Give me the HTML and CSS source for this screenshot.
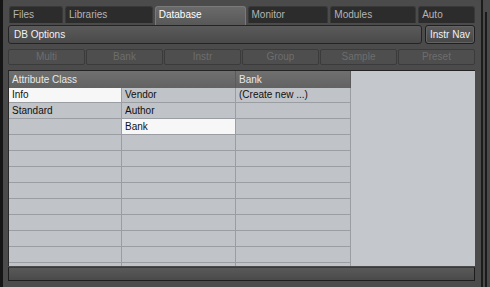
FILE: index.html
```html
<!DOCTYPE html>
<html lang="en">
<head>
    <meta charset="UTF-8">
    <title>Database</title>
    <link rel="stylesheet" href="styles.css">
</head>
<body>
    <div class="app">
        <div class="edge"></div>
        <div class="panel">
            <div class="tabs">
                <div class="tab tab-files">Files</div>
                <div class="tab tab-libs">Libraries</div>
                <div class="tab tab-db active">Database</div>
                <div class="tab tab-mon">Monitor</div>
                <div class="tab tab-mod">Modules</div>
                <div class="tab tab-auto">Auto</div>
            </div>
            <div class="optbar">
                <div class="dbopts">DB Options</div>
                <div class="navbtn">Instr Nav</div>
            </div>
            <div class="tools">
                <div class="tool">Multi</div>
                <div class="tool">Bank</div>
                <div class="tool">Instr</div>
                <div class="tool">Group</div>
                <div class="tool">Sample</div>
                <div class="tool">Preset</div>
            </div>
            <div class="table">
                <div class="grid">
                    <div class="head span2">Attribute Class</div>
                    <div class="head">Bank</div>

                    <div class="cell first sel">Info</div>
                    <div class="cell first">Vendor</div>
                    <div class="cell first">(Create new ...)</div>

                    <div class="cell">Standard</div>
                    <div class="cell">Author</div>
                    <div class="cell"></div>

                    <div class="cell"></div>
                    <div class="cell sel">Bank</div>
                    <div class="cell"></div>

                    <div class="cell"></div><div class="cell"></div><div class="cell"></div>
                    <div class="cell"></div><div class="cell"></div><div class="cell"></div>
                    <div class="cell"></div><div class="cell"></div><div class="cell"></div>
                    <div class="cell"></div><div class="cell"></div><div class="cell"></div>
                    <div class="cell"></div><div class="cell"></div><div class="cell"></div>
                    <div class="cell"></div><div class="cell"></div><div class="cell"></div>
                    <div class="cell"></div><div class="cell"></div><div class="cell"></div>
                    <div class="cell"></div><div class="cell"></div><div class="cell"></div>
                    <div class="cell"></div><div class="cell"></div><div class="cell"></div>
                </div>
                <div class="blank"></div>
            </div>
            <div class="statusbar"></div>
        </div>
        <div class="side">
            <div class="side-gap"></div>
            <div class="side-panel">
                <div class="side-line"></div>
            </div>
        </div>
    </div>
</body>
</html>
```

FILE: styles.css
```css
* {
    box-sizing: border-box;
}
html, body {
    margin: 0;
    height: 100%;
}
body {
    background: #4a4a4a;
    font-family: "Liberation Sans", Arial, sans-serif;
    font-size: 10px;
    overflow: hidden;
}
.app {
    display: flex;
    height: 287px;
}
.edge {
    width: 3px;
    background: #151515;
}
.panel {
    width: 478px;
    background: #4b4b4b;
    border-radius: 6px 6px 0 0;
    padding: 6px 6px 0 5px;
    display: flex;
    flex-direction: column;
}

/* tabs */
.tabs {
    display: flex;
    align-items: flex-start;
    height: 19px;
}
.tab {
    height: 17px;
    line-height: 15px;
    padding-left: 3px;
    background: #2c2c2c;
    border: 1px solid #393939;
    border-bottom: none;
    border-radius: 3px 3px 0 0;
    color: #b4b4b4;
    white-space: nowrap;
}
.tab.active {
    height: 19px;
    background: linear-gradient(#6a6a6a, #585858);
    border-color: #7a7a7a;
    color: #ffffff;
}
.tab-files { width: 54px; margin-left: 1px; }
.tab-libs { width: 88px; margin-left: 2px; }
.tab-db { width: 91px; margin-left: 2px; }
.tab-mon { width: 81px; margin-left: 2px; }
.tab-mod { width: 86px; margin-left: 2px; }
.tab-auto { width: 57px; margin-left: 2px; }

/* options bar */
.optbar {
    display: flex;
    height: 19px;
}
.dbopts {
    flex: 1;
    border: 1px solid #242424;
    border-radius: 3px;
    background: linear-gradient(#5a5a5a, #4a4a4a);
    color: #f2f2f2;
    line-height: 17px;
    padding-left: 5px;
}
.navbtn {
    width: 50px;
    margin-left: 3px;
    border: 1px solid #1f1f1f;
    border-radius: 3px;
    background: linear-gradient(#5c5c5c, #474747);
    box-shadow: inset 0 0 0 1px #636363;
    color: #f2f2f2;
    line-height: 17px;
    text-align: center;
}

/* disabled tool buttons */
.tools {
    display: grid;
    grid-template-columns: repeat(6, 1fr);
    gap: 1px;
    height: 16px;
    margin-top: 5px;
}
.tool {
    border: 1px solid #3b3b3b;
    border-radius: 2px;
    background: #4e4e4e;
    color: #6d6d6d;
    text-align: center;
    line-height: 14px;
}

/* table */
.table {
    display: flex;
    height: 196px;
    margin-top: 5px;
    border-top: 1px solid #232323;
    border-left: 1px solid #2a2a2a;
    overflow: hidden;
}
.grid {
    width: 342px;
    display: grid;
    grid-template-columns: 113px 114px 115px;
    grid-auto-rows: 16px;
    grid-template-rows: 17px 15px;
    align-content: start;
    background: #c0c3c7;
}
.head {
    background: linear-gradient(#707070, #626262);
    color: #e8e8e8;
    line-height: 17px;
    padding-left: 3px;
    border-right: 1px solid #5a5a5a;
}
.head.span2 {
    grid-column: span 2;
}
.cell {
    background: #c0c3c7;
    border-right: 1px solid #9a9da2;
    border-bottom: 1px solid #9a9da2;
    color: #111111;
    line-height: 15px;
    padding-left: 3px;
    white-space: nowrap;
}
.cell.first {
    line-height: 14px;
}
.cell.sel {
    background: #f7f7f7;
}
.blank {
    flex: 1;
    background: #c4c7cb;
}

/* bottom bar */
.statusbar {
    height: 14px;
    margin-top: 1px;
    border: 1px solid #1d1d1d;
    border-top-color: #3a3a3a;
    background: linear-gradient(#595959, #4a4a4a);
}

/* neighbouring panel at the right edge */
.side {
    flex: 1;
    display: flex;
}
.side-gap {
    width: 2px;
    background: #1c1c1c;
}
.side-panel {
    flex: 1;
    background: #4a4a4a;
    border-radius: 4px 0 0 0;
    padding: 12px 0 0 2px;
}
.side-line {
    width: 2px;
    height: 100%;
    background: #1a1a1a;
}
```
